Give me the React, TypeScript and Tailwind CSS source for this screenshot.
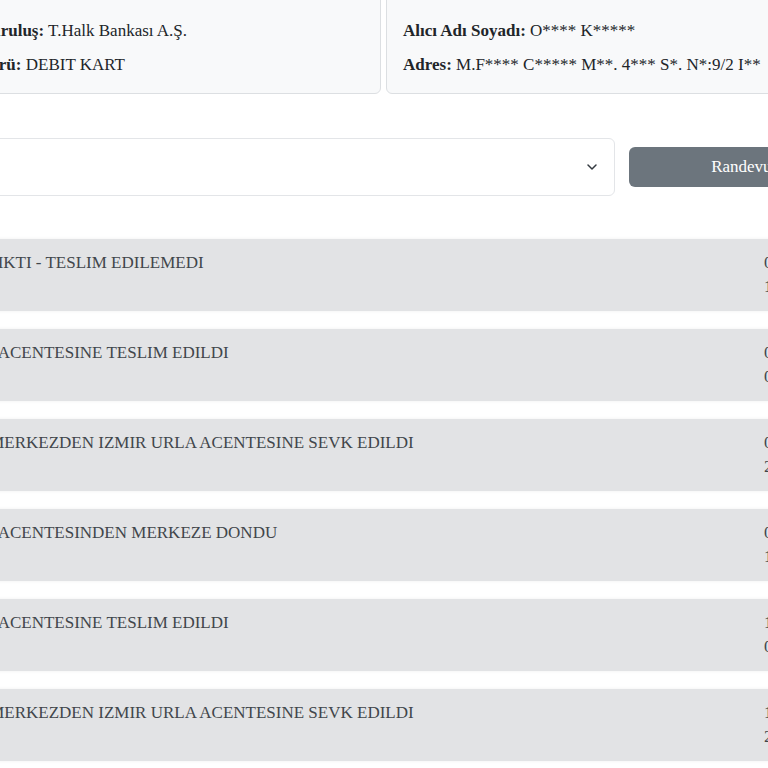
import { ChevronDown } from "lucide-react"

const moves = [
  { text: "EVE ÇIKTI - TESLIM EDILEMEDI", date: "09.03.2024", time: "15:42" },
  { text: "URLA ACENTESINE TESLIM EDILDI", date: "09.03.2024", time: "09:10" },
  { text: "ANA MERKEZDEN IZMIR URLA ACENTESINE SEVK EDILDI", date: "08.03.2024", time: "21:35" },
  { text: "URLA ACENTESINDEN MERKEZE DONDU", date: "07.03.2024", time: "17:20" },
  { text: "URLA ACENTESINE TESLIM EDILDI", date: "16.02.2024", time: "09:48" },
  { text: "ANA MERKEZDEN IZMIR URLA ACENTESINE SEVK EDILDI", date: "15.02.2024", time: "22:05" },
]

export default function App() {
  return (
    <div className="w-[768px] h-[768px] overflow-hidden bg-white">
      <div className="-ml-[64px] w-[960px] font-['Liberation_Serif',serif] text-[17px] leading-6 text-[#212529]">
        {/* Kart / alıcı bilgileri */}
        <div className="flex gap-[5px] pl-[25px] -mt-[12px]">
          <div className="w-[420px] rounded-md border border-[#dcdfe2] bg-[#f8f9fa] px-4 pt-[30px] pb-4">
            <p className="mb-[10px]">
              <b>Kuruluş:</b> T.Halk Bankası A.Ş.
            </p>
            <p>
              <b>Türü:</b> DEBIT KART
            </p>
          </div>
          <div className="w-[420px] rounded-md border border-[#dcdfe2] bg-[#f8f9fa] px-4 pt-[30px] pb-4">
            <p className="mb-[10px]">
              <b>Alıcı Adı Soyadı:</b> O**** K*****
            </p>
            <p className="whitespace-nowrap">
              <b>Adres:</b> M.F**** C***** M**. 4*** S*. N*:9/2 I**
            </p>
          </div>
        </div>

        {/* Randevu */}
        <div className="mt-[44px] flex items-center gap-[14px] pl-[25px] pr-[22px]">
          <div className="relative flex-1 h-[58px] rounded-md border border-[#e3e5e8] bg-white">
            <ChevronDown
              size={16}
              strokeWidth={2.25}
              className="absolute right-[14px] top-1/2 -translate-y-1/2 text-[#343a40]"
            />
          </div>
          <button className="h-10 w-[245px] rounded-md bg-[#6c757d] text-white">Randevu Al</button>
        </div>

        {/* Hareketler */}
        <div className="mt-[43px] flex flex-col gap-[18px]">
          {moves.map((m, i) => (
            <div
              key={i}
              className="flex h-[72px] justify-between bg-[#e2e3e5] pl-[13px] pr-4 py-3 text-[#41464b] shadow-[0_0_4px_rgba(0,0,0,0.06)]"
            >
              <div className="whitespace-nowrap">{m.text}</div>
              <div className="w-[116px]">
                <div>{m.date}</div>
                <div>{m.time}</div>
              </div>
            </div>
          ))}
        </div>
      </div>
    </div>
  )
}
